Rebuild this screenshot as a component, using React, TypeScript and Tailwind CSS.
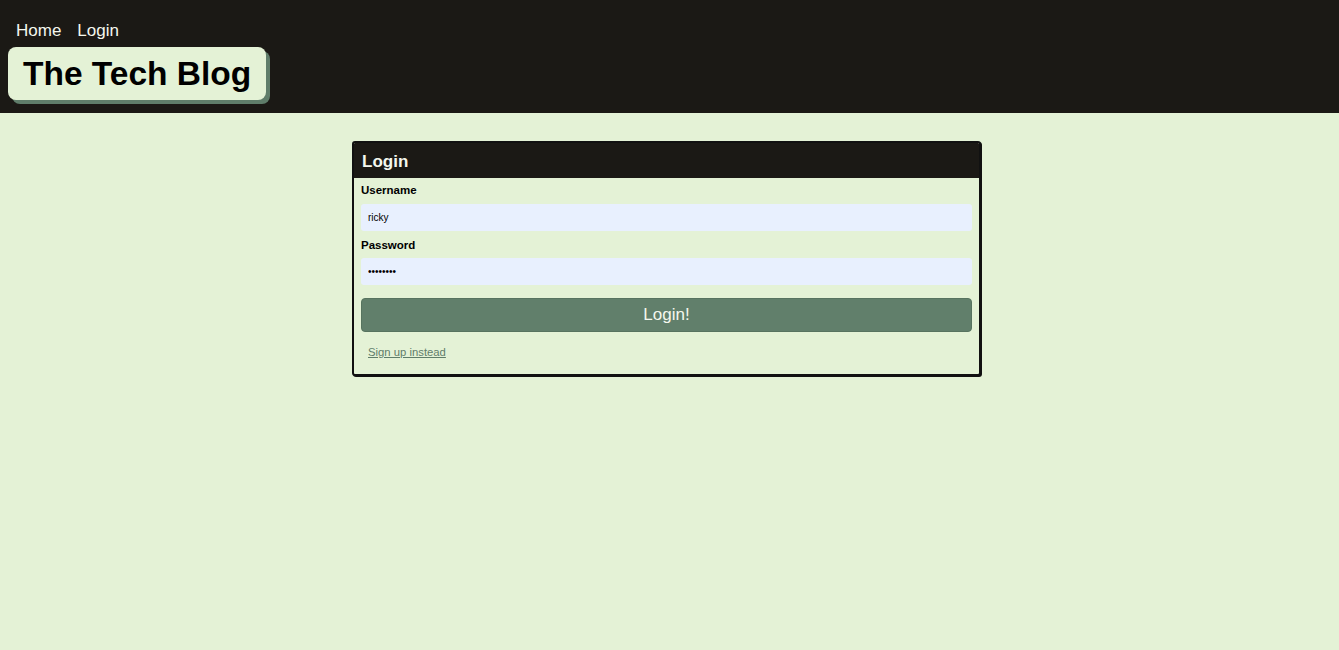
function Header() {
    return (
        <header className="h-[113px] bg-[#1b1915] px-2 pt-[20px]">
            <nav className="flex gap-[16px] pl-2 text-[17px] leading-[22px] text-[#f4f7ee]">
                <a href="#">Home</a>
                <a href="#">Login</a>
            </nav>
            <div className="mt-[5px] inline-block rounded-[8px] bg-[#e4f2d6] px-[15px] py-[5px] shadow-[4px_4px_0_#5f7d6a]">
                <h1 className="text-[33.5px] font-bold leading-[43px] text-black">The Tech Blog</h1>
            </div>
        </header>
    );
}

function LoginCard() {
    return (
        <div className="ml-[352px] mt-[28px] w-[629px] overflow-hidden rounded-[3px] border-2 border-[#111] bg-[#e4f2d6] shadow-[1px_1px_0_#111]">
            <div className="bg-[#1b1915] px-[8px] pb-[6px] pt-[8px] text-[17px] font-bold leading-[21px] text-[#f4f7ee]">
                Login
            </div>
            <form className="flex flex-col px-[7px] pb-[14px] pt-[5px] text-black">
                <label className="text-[11.5px] font-bold leading-[15px]">Username</label>
                <input
                    defaultValue="ricky"
                    className="mt-[6px] h-[27px] rounded-[3px] bg-[#e8f0fe] px-[7px] text-[10px] text-black outline-none"
                />
                <label className="mt-[7px] text-[11.5px] font-bold leading-[15px]">Password</label>
                <input
                    type="password"
                    defaultValue="password"
                    className="mt-[5px] h-[27px] rounded-[3px] bg-[#e8f0fe] px-[7px] text-[10px] text-black outline-none"
                />
                <button
                    type="button"
                    className="mt-[13px] h-[34px] rounded-[4px] border border-[#57735f] bg-[#617f6b] text-[17px] text-[#f4f7ee]"
                >
                    Login!
                </button>
                <a href="#" className="ml-[7px] mt-[13px] text-[11.3px] leading-[15px] text-[#5f7d6a] underline">
                    Sign up instead
                </a>
            </form>
        </div>
    );
}

export default function App() {
    return (
        <div className="min-h-[650px] bg-[#e4f2d6] font-['Liberation_Sans',Arial,sans-serif]">
            <Header />
            <LoginCard />
        </div>
    );
}
